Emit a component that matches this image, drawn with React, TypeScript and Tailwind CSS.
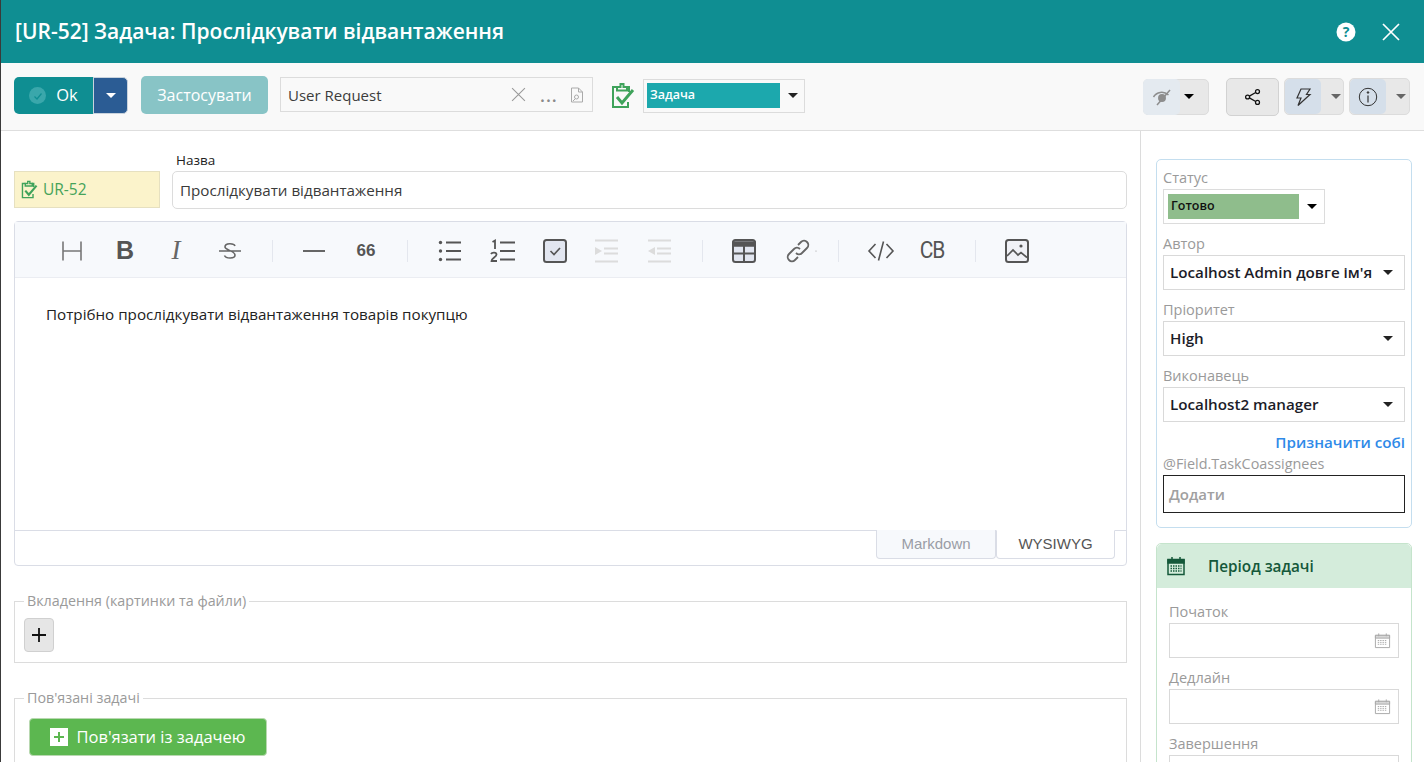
import type { ReactNode } from "react";

const FONT = "font-['Open_Sans','Noto_Sans',sans-serif]";

function ClipCheck({ className }: { className: string }) {
  return (
    <svg viewBox="0 0 24 27" fill="none" stroke="#3fa35b" strokeWidth="2" className={className}>
      <path d="M6 5H2v20h15v-5" />
      <path d="M15 5h3v5" />
      <path d="M6 8.500V5h3.500V2h3v3H16v3.500z" />
      <path d="M6 15l5 6L22 8" strokeWidth="3" />
    </svg>
  );
}

function Caret({ className = "border-t-black" }: { className?: string }) {
  return <span className={`h-0 w-0 border-x-[5px] border-t-[5px] border-x-transparent ${className}`} />;
}

function CalendarIcon() {
  return (
    <svg viewBox="0 0 18 18" fill="none" stroke="#a8a8a8" className="h-[17px] w-[17px]">
      <path d="M1.500 3.500h15v13h-15z" />
      <path d="M1.500 3.500h15v3h-15z" fill="#d8d8d8" />
      <path d="M5 1.500v3M13 1.500v3" />
      <path d="M4 9h10M4 11h10M4 13h10" strokeDasharray="1.500 1" />
    </svg>
  );
}

function Tool({ children, className = "" }: { children: ReactNode; className?: string }) {
  return (
    <svg viewBox="0 0 24 24" fill="none" stroke="#555" strokeWidth="1.600" className={`h-6 w-6 overflow-visible ${className}`}>
      {children}
    </svg>
  );
}

function ToolSep({ className }: { className: string }) {
  return <span className={`h-[22px] w-px bg-[#e4e7ee] ${className}`} />;
}

function SideSelect({ label, value }: { label: string; value: string }) {
  return (
    <div>
      <p className="h-[22px] text-[14.500px] leading-[22px] text-[#9a9a9a]">{label}</p>
      <div className="flex h-[35px] items-center justify-between border border-[#d9d9d9] pl-[6px] pr-[11px]">
        <span className="whitespace-nowrap text-[15.200px] font-semibold text-[#1c1c28]">{value}</span>
        <Caret className="shrink-0 border-t-[#222]" />
      </div>
    </div>
  );
}

function DateField({ label }: { label: string }) {
  return (
    <div>
      <p className="h-[22px] text-[14.500px] leading-[22px] text-[#9a9a9a]">{label}</p>
      <div className="flex h-[35px] items-center justify-end border border-[#d9d9d9] pr-[7px]">
        <CalendarIcon />
      </div>
    </div>
  );
}

export default function App() {
  return (
    <div className={`flex h-[762px] w-[1424px] flex-col overflow-hidden border-l border-[#3a3a3a] bg-white ${FONT}`}>
      <header className="flex h-[63px] shrink-0 items-center justify-between bg-[#0f8e92] pl-[14px] pr-[23px]">
        <h1 className="text-[21px] font-semibold text-white">[UR-52] Задача: Прослідкувати відвантаження</h1>
        <div className="flex items-center gap-[25px]">
          <svg viewBox="0 0 20 20" className="h-5 w-5">
            <circle cx="10" cy="10" r="9.500" fill="#fff" />
            <text x="10" y="15" textAnchor="middle" fontSize="14" fontWeight="700" fill="#0f8e92">?</text>
          </svg>
          <svg viewBox="0 0 20 20" stroke="#fff" strokeWidth="1.700" className="h-5 w-5">
            <path d="M2 2l16 16M18 2L2 18" />
          </svg>
        </div>
      </header>

      <div className="flex h-[68px] shrink-0 items-center border-b border-[#dedede] bg-[#f9f9f9] pb-[2px] pl-[13px] pr-[14px]">
        <div className="flex h-[37px] w-[79px] items-center justify-center gap-[10px] rounded-l-[5px] bg-[#0f8e92] text-[16.500px] text-white">
          <span className="flex h-[17px] w-[17px] items-center justify-center rounded-full bg-[#3aa7ab]">
            <svg viewBox="0 0 12 12" fill="none" stroke="#0f8e92" strokeWidth="1.200" className="h-3 w-3">
              <path d="M2.500 6.500l2.500 2.500 4.500-5.500" />
            </svg>
          </span>
          Ok
        </div>
        <div className="flex h-[37px] w-[35px] items-center justify-center rounded-r-[5px] border border-[#c9d3dd] bg-[#2b5c94]">
          <Caret className="border-t-white" />
        </div>
        <div className="-mt-[2px] ml-[13px] flex h-[38px] w-[127px] items-center justify-center rounded-[5px] bg-[#88c4c6] text-[16px] text-white">
          Застосувати
        </div>
        <div className="-mt-[2px] ml-[12px] flex h-[35px] w-[313px] items-center border border-[#dcdcdc] pl-[7px] pr-[8px] text-[15px] text-[#3c3c3c]">
          <span className="mt-[2px] flex-1">User Request</span>
          <svg viewBox="0 0 14 14" stroke="#9a9a9a" className="h-[15px] w-[15px]">
            <path d="M1 1l12 12M13 1L1 13" />
          </svg>
          <span className="ml-[14px] w-[16px] text-[18px] font-semibold leading-none tracking-[1px] text-[#8a8a8a]">...</span>
          <svg viewBox="0 0 14 16" fill="none" stroke="#aaa" className="ml-[14px] h-4 w-[14px]">
            <path d="M1.500 1h7l4 4v10h-11zM8.500 1v4h4" />
            <circle cx="6.500" cy="10" r="2" />
            <path d="M5 12l-2 2" />
          </svg>
        </div>
        <ClipCheck className="ml-[18px] h-[27px] w-[24px]" />
        <div className="ml-[8px] flex h-[34px] w-[162px] items-center border border-[#dcdcdc] pl-[3px]">
          <span className="flex h-[25px] w-[133px] items-center bg-[#1ca8ad] pl-[3px] text-[12.500px] font-semibold text-white">Задача</span>
          <Caret className="ml-[8px] border-t-[#222]" />
        </div>

        <div className="ml-auto mt-[2px] flex h-[36px] w-[66px] items-center rounded-[5px] border border-[#dcdcdc] bg-[#e8e8e8]">
          <div className="-ml-px flex h-[36px] w-[37px] items-center justify-center rounded-[5px] bg-[#e4eaf0]">
            <svg viewBox="0 0 20 20" fill="none" stroke="#8d8d8d" strokeWidth="1.500" className="h-[20px] w-[20px]">
              <path d="M1.500 10c3-5 10-6.500 15-2" />
              <circle cx="10" cy="11" r="3.200" fill="#8d8d8d" />
              <path d="M18 3L5 18" />
            </svg>
          </div>
          <Caret className="ml-[4px] border-t-black" />
        </div>
        <div className="ml-[17px] mt-[2px] flex h-[38px] w-[53px] items-center justify-center rounded-[5px] border border-[#d2d2d2] bg-[#e8e8e8]">
          <svg viewBox="0 0 20 20" fill="none" stroke="#111" strokeWidth="1.400" className="h-[18px] w-[18px]">
            <circle cx="15" cy="4" r="2.200" />
            <circle cx="4" cy="10" r="2.200" />
            <circle cx="15" cy="16" r="2.200" />
            <path d="M13 5l-7 4M6 11l7 4" />
          </svg>
        </div>
        <div className="ml-[5px] mt-[2px] flex h-[37px] w-[60px] items-center rounded-[5px] border border-[#dcdcdc] bg-[#e8e8e8]">
          <div className="flex h-[35px] w-[36px] items-center justify-center rounded-[5px] bg-[#d5dfea]">
            <svg viewBox="0 0 20 20" fill="none" stroke="#333" strokeWidth="1.200" className="h-[20px] w-[20px]">
              <path d="M8 2h9l-3.500 5.500h3.500L5 18.500 8 11H4z" />
            </svg>
          </div>
          <Caret className="ml-[10px] border-t-[#666]" />
        </div>
        <div className="ml-[5px] mt-[2px] flex h-[37px] w-[61px] items-center rounded-[5px] border border-[#dcdcdc] bg-[#e8e8e8]">
          <div className="flex h-[35px] w-[36px] items-center justify-center rounded-[5px] bg-[#d5dfea]">
            <svg viewBox="0 0 20 20" fill="none" stroke="#333" strokeWidth="1" className="h-5 w-5">
              <circle cx="10" cy="10" r="8.700" />
              <path d="M10 8.500v7" strokeWidth="1.200" />
              <circle cx="10" cy="5.500" r="0.800" fill="#333" />
            </svg>
          </div>
          <Caret className="ml-[10px] border-t-[#666]" />
        </div>
      </div>

      <div className="flex min-h-0 flex-1">
        <main className="w-[1140px] shrink-0 border-r border-[#dcdcdc] pl-[13px] pr-[13px]">
          <div className="flex h-[90px] items-end gap-[12px] pb-[12px]">
            <div className="mb-px flex h-[37px] w-[146px] items-center gap-[5px] border border-[#e6e0c0] bg-[#fbf3cb] pl-[6px] text-[15.500px] text-[#46a35a]">
              <ClipCheck className="h-[19px] w-[17px]" />
              UR-52
            </div>
            <div className="flex-1">
              <p className="mb-[2px] pl-[4px] text-[13.500px] leading-[18px] text-[#222]">Назва</p>
              <div className="flex h-[38px] items-center rounded-[5px] border border-[#dcdcdc] pl-[7px] text-[15.200px] text-[#3a3a3a]">
                Прослідкувати відвантаження
              </div>
            </div>
          </div>

          <section className="flex h-[345px] flex-col rounded-[4px] border border-[#dadde6]">
            <div className="flex h-[56px] shrink-0 items-center border-b border-[#ebedf2] bg-[#f7f9fc] pl-[45px] pt-[2px]">
              <Tool>
                <path d="M3 2.500v19M21 2.500v19M3 12h18" stroke="#777" />
              </Tool>
              <span className="ml-[29px] flex w-6 justify-center font-['Liberation_Sans',sans-serif] text-[25px] font-bold leading-none text-[#555]">B</span>
              <span className="ml-[27px] flex w-6 justify-center font-['Liberation_Serif',serif] text-[27px] italic leading-none text-[#666]">I</span>
              <Tool className="ml-[30px]">
                <path d="M17 7c-1-3-10-3.500-10 1 0 3 10 4 10 8 0 4-9 4-10.500 .5M1 12h22" stroke="#666" />
              </Tool>
              <ToolSep className="ml-[30px]" />
              <Tool className="ml-[29px]">
                <path d="M1 12h22" strokeWidth="2" stroke="#666" />
              </Tool>
              <span className="ml-[28px] flex w-6 justify-center font-['Liberation_Sans',sans-serif] text-[17px] font-bold leading-none text-[#555]">66</span>
              <ToolSep className="ml-[29px]" />
              <Tool className="ml-[30px]">
                <path d="M8 3.500h15M8 12h15M8 20.500h15" stroke="#555" strokeWidth="2" />
                <circle cx="2.500" cy="3.500" r="1.700" fill="#555" stroke="none" />
                <circle cx="2.500" cy="12" r="1.700" fill="#555" stroke="none" />
                <circle cx="2.500" cy="20.500" r="1.700" fill="#555" stroke="none" />
              </Tool>
              <Tool className="ml-[28px]">
                <path d="M10 3.500h15M10 12h15M10 20.500h15" stroke="#555" strokeWidth="2" />
                <path d="M2.500 3l2.500-1.500v8.500M1 15c1-2 5.500-2 5.500 .5s-5 3.500-5 6.500h5.500" stroke="#555" strokeWidth="1.800" />
              </Tool>
              <Tool className="ml-[29px]">
                <rect x="1" y="1" width="22" height="22" rx="2.500" fill="#e2e6f0" stroke="#555" strokeWidth="2" />
                <path d="M7.500 12l3.500 3.500 6-6.500" stroke="#555" strokeWidth="1.700" />
              </Tool>
              <Tool className="ml-[28px]">
                <path d="M0 1.500h23M9 9.500h14M9 14.500h14M0 22.500h23" stroke="#dcdcdc" strokeWidth="2" />
                <path d="M0 8l7 4-7 4z" fill="#dcdcdc" stroke="none" />
              </Tool>
              <Tool className="ml-[29px]">
                <path d="M0 1.500h23M9 9.500h14M9 14.500h14M0 22.500h23" stroke="#dcdcdc" strokeWidth="2" />
                <path d="M7 8L0 12l7 4z" fill="#dcdcdc" stroke="none" />
              </Tool>
              <ToolSep className="ml-[30px]" />
              <Tool className="ml-[29px]">
                <rect x="1" y="1" width="22" height="22" rx="2.500" fill="#e2e6f0" stroke="#555" strokeWidth="2" />
                <path d="M1 3h22v4H1z" fill="#555" />
                <path d="M12 7v16M1 14.500h22" stroke="#555" strokeWidth="2" />
              </Tool>
              <Tool className="ml-[30px]">
                <path d="M10 14c2 2 4.500 1.500 6 0l5-5c2-2 1.500-4.500 0-6s-4-2-6 0l-3 3" stroke="#666" strokeWidth="1.800" />
                <path d="M14 10c-2-2-4.500-1.500-6 0l-5 5c-2 2-1.500 4.500 0 6s4 2 6 0l3-3" stroke="#666" strokeWidth="1.800" />
                <circle cx="30" cy="12" r="0.600" fill="#999" stroke="none" />
              </Tool>
              <ToolSep className="ml-[28px]" />
              <Tool className="ml-[27px] !w-[30px]">
                <path d="M6.500 5L0 12l6.500 7M17.500 5L24 12l-6.500 7M14.500 2.500L9.500 21.500" stroke="#555" strokeWidth="1.600" />
              </Tool>
              <span className="ml-[24px] flex w-6 scale-y-[1.15] justify-center font-['Roboto',sans-serif] text-[21px] leading-none tracking-[-1px] text-[#555]">CB</span>
              <ToolSep className="ml-[31px]" />
              <Tool className="ml-[29px]">
                <rect x="1" y="1" width="22" height="22" rx="2.500" fill="#f0f1f6" stroke="#555" strokeWidth="2" />
                <path d="M2 17l6-6 5 5 3-2.500 6 5" stroke="#555" strokeWidth="1.700" />
                <circle cx="16" cy="7" r="1.600" fill="#555" stroke="none" />
              </Tool>
            </div>

            <div className="flex-1 pl-[31px] pt-[24px] text-[15.200px] leading-[24px] text-[#222]">
              Потрібно прослідкувати відвантаження товарів покупцю
            </div>

            <div className="flex h-[35px] shrink-0 justify-end border-t border-[#dadde6] pr-[11px] font-['Liberation_Sans',sans-serif] text-[15px]">
              <div className="-mt-px flex h-[29px] w-[120px] items-center justify-center rounded-b-[4px] border border-t-0 border-[#dadde6] bg-[#f7f9fc] text-[#9a9da6]">
                Markdown
              </div>
              <div className="-mt-px flex h-[29px] w-[119px] items-center justify-center rounded-b-[4px] border border-[#dadde6] border-t-white bg-white text-[#555]">
                WYSIWYG
              </div>
            </div>
          </section>

          <fieldset className="mt-[25px] h-[72px] border border-[#dcdcdc] pl-[9px]">
            <legend className="px-[3px] text-[14.300px] leading-[20px] text-[#9a9a9a]">Вкладення (картинки та файли)</legend>
            <div className="mt-[7px] flex h-[34px] w-[30px] items-center justify-center rounded-[4px] border border-[#d0d0d0] bg-[#e6e6e6]">
              <svg viewBox="0 0 14 14" stroke="#111" strokeWidth="1.800" className="h-[14px] w-[14px]">
                <path d="M7 0v14M0 7h14" />
              </svg>
            </div>
          </fieldset>

          <fieldset className="mt-[25px] h-[120px] border border-[#dcdcdc] pl-[14px]">
            <legend className="ml-[-5px] px-[3px] text-[14.300px] leading-[20px] text-[#9a9a9a]">Пов'язані задачі</legend>
            <div className="mt-[10px] flex h-[38px] w-[238px] items-center justify-center gap-[8px] rounded-[4px] border border-[#b8d8b0] bg-[#5cb750] text-[16.500px] text-white">
              <span className="flex h-[18px] w-[18px] items-center justify-center bg-white">
                <svg viewBox="0 0 12 12" stroke="#5cb750" strokeWidth="2" className="h-3 w-3">
                  <path d="M6 1v10M1 6h10" />
                </svg>
              </span>
              Пов'язати із задачею
            </div>
          </fieldset>
        </main>

        <aside className="min-w-0 flex-1 pl-[15px] pr-[12px] pt-[28px]">
          <section className="h-[369px] rounded-[5px] border border-[#c4deef] px-[6px] pt-[7px]">
            <p className="h-[22px] text-[14.500px] leading-[22px] text-[#9a9a9a]">Статус</p>
            <div className="flex h-[35px] w-[162px] items-center border border-[#dcdcdc] pl-[4px]">
              <span className="flex h-[25px] w-[131px] items-center bg-[#8fbd8c] pl-[3px] text-[12.500px] font-semibold text-[#111]">Готово</span>
              <Caret className="ml-[8px] border-t-black" />
            </div>
            <div className="mt-[9px] flex flex-col gap-[9px]">
              <SideSelect label="Автор" value="Localhost Admin довге ім'я" />
              <SideSelect label="Пріоритет" value="High" />
              <SideSelect label="Виконавець" value="Localhost2 manager" />
            </div>
            <p className="mt-[10px] text-right text-[15.200px] font-semibold leading-[20px] text-[#2f8ae8]">Призначити собі</p>
            <p className="mt-px h-[22px] text-[14.400px] leading-[22px] text-[#9a9a9a]">@Field.TaskCoassignees</p>
            <div className="flex h-[38px] items-center border border-[#222] pl-[5px] text-[15px] font-semibold text-[#a0a0a0]">Додати</div>
          </section>

          <section className="mt-[15px] h-[300px] rounded-[5px] border border-[#c5e4cc]">
            <div className="flex h-[44px] items-center rounded-t-[5px] bg-[#d4ecdb] pl-[9px]">
              <svg viewBox="0 0 20 20" fill="none" stroke="#14583a" strokeWidth="1.500" className="h-[20px] w-[20px]">
                <path d="M2 3.500h16v15H2z" />
                <path d="M2 4h16v3H2z" fill="#14583a" />
                <path d="M6 1v4M14 1v4" />
                <path d="M4.500 10h11M4.500 12.500h11M4.500 15h11" strokeDasharray="1.500 1" strokeWidth="1.300" />
              </svg>
              <span className="ml-[22px] text-[15.300px] font-semibold text-[#14583a]">Період задачі</span>
            </div>
            <div className="flex flex-col gap-[9px] px-[12px] pt-[13px]">
              <DateField label="Початок" />
              <DateField label="Дедлайн" />
              <DateField label="Завершення" />
            </div>
          </section>
        </aside>
      </div>
    </div>
  );
}
